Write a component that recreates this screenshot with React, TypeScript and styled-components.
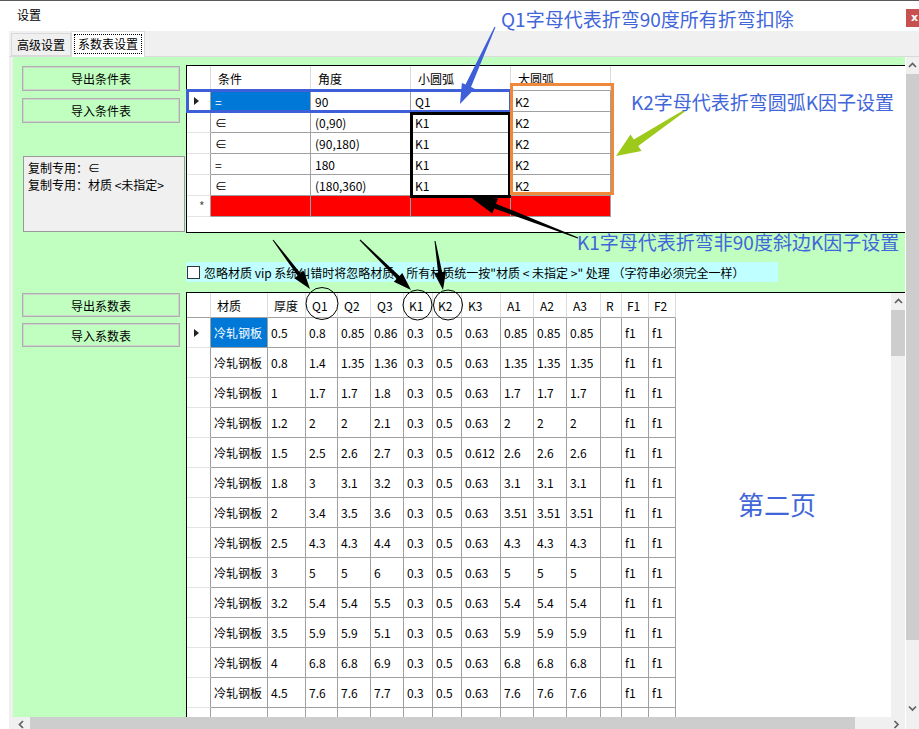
import React from "react";
import styled, { createGlobalStyle } from "styled-components";

const UI_FONT = `"Noto Sans CJK SC", "Noto Sans", "DejaVu Sans", sans-serif`;

const GlobalStyle = createGlobalStyle`
  * { box-sizing: border-box; }
  html, body { margin: 0; padding: 0; background: #ffffff; }
  body { font-family: ${UI_FONT}; font-size: 12px; color: #000; }
`;

/* ---------- window frame ---------- */
const Window = styled.div`
  position: relative;
  width: 919px;
  height: 729px;
  overflow: hidden;
  display: flex;
  flex-direction: column;
  background: #fff;
`;

const TitleBar = styled.div`
  height: 31px;
  flex: none;
  display: flex;
  justify-content: space-between;
  align-items: flex-start;
  border-top: 1px solid #5a5a5a;
  background: #fff;
`;

const Title = styled.span`
  margin: 6px 0 0 17px;
  line-height: 16px;
`;

const CloseBtn = styled.div`
  margin-top: 8px;
  width: 13px;
  height: 18px;
  padding-left: 5px;
  background: #c75050;
  color: #fff;
  font: bold 11px/17px "DejaVu Sans", sans-serif;
`;

const Body = styled.div`
  flex: 1;
  display: flex;
  min-height: 0;
`;

const WhiteEdge = styled.div`
  width: 9px;
  flex: none;
  background: #fff;
`;

const MainCol = styled.div`
  flex: 1;
  display: flex;
  flex-direction: column;
  min-width: 0;
`;

const TabStrip = styled.div`
  height: 26px;
  flex: none;
  display: flex;
  align-items: flex-end;
  padding-left: 2px;
  background: #f0f0f0;
  border-bottom: 1px solid #dadada;
`;

const Tab = styled.div<{ $active?: boolean }>`
  position: relative;
  z-index: 1;
  display: flex;
  align-items: center;
  height: ${(p) => (p.$active ? 26 : 23)}px;
  margin-bottom: ${(p) => (p.$active ? -1 : 0)}px;
  padding: ${(p) => (p.$active ? "0 2px 2px" : "0 5px")};
  background: ${(p) => (p.$active ? "#ffffff" : "#f0f0f0")};
  border: 1px solid #d9d9d9;
  border-bottom: ${(p) => (p.$active ? "none" : "1px solid #d9d9d9")};
  white-space: nowrap;
`;

const FocusLabel = styled.span`
  border: 1px dotted #000;
  padding: 0 3px;
  line-height: 18px;
`;

const ContentRow = styled.div`
  flex: 1;
  display: flex;
  min-height: 0;
`;

const GrayEdge = styled.div`
  width: 4px;
  flex: none;
  background: #f0f0f0;
`;

const CenterCol = styled.div`
  width: 892px;
  flex: none;
  display: flex;
  flex-direction: column;
`;

const RightCol = styled.div`
  width: 14px;
  flex: none;
  display: flex;
  flex-direction: column;
`;

/* ---------- tab page ---------- */
const TabPage = styled.div`
  height: 660px;
  flex: none;
  display: flex;
  flex-direction: column;
  padding-top: 8px;
  background: #c0ffc0;
`;

const Section = styled.div<{ $h?: number; $mt?: number }>`
  display: flex;
  flex: ${(p) => (p.$h ? "none" : "1")};
  height: ${(p) => (p.$h ? `${p.$h}px` : "auto")};
  margin-top: ${(p) => p.$mt ?? 0}px;
  min-height: 0;
`;

const SideCol = styled.div`
  width: 173px;
  flex: none;
  display: flex;
  flex-direction: column;
  padding-left: 9px;
`;

const FlatButton = styled.button<{ $mt: number; $h?: number }>`
  width: 158px;
  height: ${(p) => p.$h ?? 25}px;
  margin-top: ${(p) => p.$mt}px;
  padding: 0;
  background: transparent;
  border: 1px solid #adadad;
  box-shadow: inset 0 0 0 1px #cdd6cd;
  font-family: ${UI_FONT};
  font-size: 12px;
  color: #000;
`;

const CopyBox = styled.div`
  margin: 33px 0 0 1px;
  width: 162px;
  height: 76px;
  padding: 2px 4px;
  background: #f0f0f0;
  border: 1px solid #9a9a9a;
  line-height: 17px;
  white-space: nowrap;
`;

/* ---------- data grids ---------- */
const GridBox = styled.div<{ $bottom?: boolean }>`
  flex: 1;
  display: flex;
  min-width: 0;
  background: #fff;
  border-top: 1px solid #000;
  border-left: 1px solid #000;
  border-bottom: ${(p) => (p.$bottom ? "1px solid #000" : "none")};
  overflow: hidden;
`;

const TableArea = styled.div`
  flex: 1;
  min-width: 0;
  overflow: hidden;
`;

const Table = styled.div<{ $cols: string; $rows: string }>`
  display: grid;
  grid-template-columns: ${(p) => p.$cols};
  grid-template-rows: ${(p) => p.$rows};
  width: max-content;
`;

const HeadCell = styled.div<{ $pad?: number }>`
  display: flex;
  align-items: center;
  padding-left: ${(p) => p.$pad ?? 6}px;
  border-right: 1px solid #dcdcdc;
  border-bottom: 1px solid #a0a0a0;
  background: #fff;
  white-space: nowrap;
  overflow: hidden;
`;

const RowHead = styled.div`
  display: flex;
  align-items: center;
  padding-left: 7px;
  border-right: 1px solid #a0a0a0;
  border-bottom: 1px solid #e3e3e3;
  background: #fff;
`;

const Cell = styled.div<{ $sel?: boolean; $red?: boolean; $pad?: number }>`
  display: flex;
  align-items: center;
  padding-left: ${(p) => p.$pad ?? 3}px;
  border-right: 1px solid #a0a0a0;
  border-bottom: 1px solid #a0a0a0;
  background: ${(p) => (p.$sel ? "#0078d7" : p.$red ? "#ff0000" : "#fff")};
  color: ${(p) => (p.$sel ? "#fff" : "#000")};
  white-space: nowrap;
  overflow: hidden;
`;

const Pointer = styled.span`
  width: 0;
  height: 0;
  border-top: 4.5px solid transparent;
  border-bottom: 4.5px solid transparent;
  border-left: 5px solid #222;
`;

const NewRowMark = styled.span`
  margin-left: 5px;
  color: #555;
  font-size: 12px;
  line-height: 1;
`;

/* ---------- checkbox row ---------- */
const CheckRow = styled.label`
  margin: 29px 0 0 173px;
  width: 592px;
  height: 20px;
  flex: none;
  display: flex;
  align-items: center;
  gap: 4px;
  padding-left: 1px;
  background: #c0ffff;
  white-space: nowrap;
`;

const CheckBox = styled.span`
  width: 13px;
  height: 13px;
  flex: none;
  background: #fff;
  border: 1px solid #333;
`;

/* ---------- scrollbars ---------- */
const VScroll = styled.div<{ $h: number; $edge?: boolean }>`
  height: ${(p) => p.$h}px;
  width: ${(p) => (p.$edge ? 14 : 14)}px;
  flex: none;
  display: flex;
  flex-direction: column;
  background: #f0f0f0;
  border-left: ${(p) => (p.$edge ? "1px solid #fff" : "none")};
`;

const HScroll = styled.div`
  height: 12px;
  flex: none;
  display: flex;
  background: #f0f0f0;
`;

const ArrowBox = styled.div<{ $w?: number; $h?: number; $top?: number }>`
  width: ${(p) => (p.$w ? `${p.$w}px` : "auto")};
  height: ${(p) => (p.$h ? `${p.$h}px` : "auto")};
  flex: none;
  display: flex;
  justify-content: center;
  align-items: ${(p) => (p.$top !== undefined ? "flex-start" : "center")};
  padding-top: ${(p) => p.$top ?? 0}px;
`;

const Thumb = styled.div<{ $len: number; $horizontal?: boolean }>`
  flex: none;
  background: #cdcdcd;
  ${(p) => (p.$horizontal ? `width: ${p.$len}px;` : `height: ${p.$len}px;`)}
`;

const Track = styled.div`
  flex: 1;
`;

const Corner = styled.div`
  height: 12px;
  flex: none;
  background: #f0f0f0;
  border-left: 1px solid #fff;
`;

type Dir = "up" | "down" | "left" | "right";
const chevronPts: Record<Dir, string> = {
  up: "1,6 4.5,2.5 8,6",
  down: "1,2.5 4.5,6 8,2.5",
  left: "6,1 2.5,4.5 6,8",
  right: "2.5,1 6,4.5 2.5,8",
};
const ChevronSvg = styled.svg`
  display: block;
`;
function Chevron({ dir }: { dir: Dir }) {
  return (
    <ChevronSvg width="9" height="9" viewBox="0 0 9 9">
      <polyline points={chevronPts[dir]} fill="none" stroke="#606060" strokeWidth="1.7" />
    </ChevronSvg>
  );
}

/* ---------- annotations (drawn over the screenshot) ---------- */
const OverlaySvg = styled.svg`
  position: absolute;
  left: 0;
  top: 0;
  pointer-events: none;
  z-index: 5;
`;

const Note = styled.span<{ $x: number; $y: number; $size?: number }>`
  position: absolute;
  left: ${(p) => p.$x}px;
  top: ${(p) => p.$y}px;
  z-index: 6;
  font-size: ${(p) => p.$size ?? 19}px;
  line-height: 1;
  color: #4166d9;
  white-space: nowrap;
  pointer-events: none;
`;

function arrowPoints(
  tx: number,
  ty: number,
  hx: number,
  hy: number,
  headLen: number,
  headHalf: number,
  shaftHalf: number,
  tailHalf: number
) {
  const dx = hx - tx;
  const dy = hy - ty;
  const len = Math.hypot(dx, dy);
  const ux = dx / len;
  const uy = dy / len;
  const nx = -uy;
  const ny = ux;
  const bx = hx - ux * headLen;
  const by = hy - uy * headLen;
  const pts = [
    [tx + nx * tailHalf, ty + ny * tailHalf],
    [bx + nx * shaftHalf, by + ny * shaftHalf],
    [bx + nx * headHalf, by + ny * headHalf],
    [hx, hy],
    [bx - nx * headHalf, by - ny * headHalf],
    [bx - nx * shaftHalf, by - ny * shaftHalf],
    [tx - nx * tailHalf, ty - ny * tailHalf],
  ];
  return pts.map((p) => `${p[0].toFixed(1)},${p[1].toFixed(1)}`).join(" ");
}

/* ---------- data ---------- */
const upperHeaders = ["条件", "角度", "小圆弧", "大圆弧"];
const upperRows = [
  ["=", "90", "Q1", "K2"],
  ["∈", "(0,90)", "K1", "K2"],
  ["∈", "(90,180)", "K1", "K2"],
  ["=", "180", "K1", "K2"],
  ["∈", "(180,360)", "K1", "K2"],
];

const lowerCols: { name: string; w: number }[] = [
  { name: "材质", w: 57 },
  { name: "厚度", w: 38 },
  { name: "Q1", w: 32 },
  { name: "Q2", w: 33 },
  { name: "Q3", w: 33 },
  { name: "K1", w: 29 },
  { name: "K2", w: 29 },
  { name: "K3", w: 39 },
  { name: "A1", w: 33 },
  { name: "A2", w: 33 },
  { name: "A3", w: 34 },
  { name: "R", w: 21 },
  { name: "F1", w: 27 },
  { name: "F2", w: 27 },
];

const lowerData: string[][] = [
  ["0.5", "0.8", "0.85", "0.86", "0.3", "0.5", "0.63", "0.85", "0.85", "0.85"],
  ["0.8", "1.4", "1.35", "1.36", "0.3", "0.5", "0.63", "1.35", "1.35", "1.35"],
  ["1", "1.7", "1.7", "1.8", "0.3", "0.5", "0.63", "1.7", "1.7", "1.7"],
  ["1.2", "2", "2", "2.1", "0.3", "0.5", "0.63", "2", "2", "2"],
  ["1.5", "2.5", "2.6", "2.7", "0.3", "0.5", "0.612", "2.6", "2.6", "2.6"],
  ["1.8", "3", "3.1", "3.2", "0.3", "0.5", "0.63", "3.1", "3.1", "3.1"],
  ["2", "3.4", "3.5", "3.6", "0.3", "0.5", "0.63", "3.51", "3.51", "3.51"],
  ["2.5", "4.3", "4.3", "4.4", "0.3", "0.5", "0.63", "4.3", "4.3", "4.3"],
  ["3", "5", "5", "6", "0.3", "0.5", "0.63", "5", "5", "5"],
  ["3.2", "5.4", "5.4", "5.5", "0.3", "0.5", "0.63", "5.4", "5.4", "5.4"],
  ["3.5", "5.9", "5.9", "5.1", "0.3", "0.5", "0.63", "5.9", "5.9", "5.9"],
  ["4", "6.8", "6.8", "6.9", "0.3", "0.5", "0.63", "6.8", "6.8", "6.8"],
  ["4.5", "7.6", "7.6", "7.7", "0.3", "0.5", "0.63", "7.6", "7.6", "7.6"],
];

const lowerTemplate = ["24px", ...lowerCols.map((c) => `${c.w}px`)].join(" ");

function UpperGrid() {
  return (
    <GridBox $bottom>
      <TableArea>
        <Table $cols="24px repeat(4, 100px)" $rows="25px repeat(6, 21px)">
          <HeadCell />
          {upperHeaders.map((h) => (
            <HeadCell key={h} $pad={7}>
              {h}
            </HeadCell>
          ))}
          {upperRows.map((row, r) => (
            <React.Fragment key={r}>
              <RowHead>{r === 0 && <Pointer />}</RowHead>
              {row.map((v, c) => (
                <Cell key={c} $pad={4} $sel={r === 0 && c === 0}>
                  {v}
                </Cell>
              ))}
            </React.Fragment>
          ))}
          <RowHead>
            <NewRowMark>*</NewRowMark>
          </RowHead>
          {[0, 1, 2, 3].map((c) => (
            <Cell key={c} $red />
          ))}
        </Table>
      </TableArea>
    </GridBox>
  );
}

function LowerGrid() {
  return (
    <GridBox>
      <TableArea>
        <Table $cols={lowerTemplate} $rows="25px repeat(14, 30px)">
          <HeadCell />
          {lowerCols.map((c) => (
            <HeadCell key={c.name} $pad={c.w < 30 ? 5 : 6}>
              {c.name}
            </HeadCell>
          ))}
          {lowerData.map((row, r) => (
            <React.Fragment key={r}>
              <RowHead>{r === 0 && <Pointer />}</RowHead>
              <Cell $sel={r === 0}>冷轧钢板</Cell>
              {row.map((v, c) => (
                <Cell key={c}>{v}</Cell>
              ))}
              <Cell />
              <Cell>f1</Cell>
              <Cell>f1</Cell>
            </React.Fragment>
          ))}
          <RowHead />
          {lowerCols.map((c) => (
            <Cell key={c.name} />
          ))}
        </Table>
      </TableArea>
      <VScroll $h={424}>
        <ArrowBox $h={17}>
          <Chevron dir="up" />
        </ArrowBox>
        <Thumb $len={46} />
        <Track />
      </VScroll>
    </GridBox>
  );
}

function Annotations() {
  return (
    <>
      <OverlaySvg width="919" height="729" viewBox="0 0 919 729">
        {/* blue frame around the first condition row */}
        <rect x="187.5" y="90.5" width="323" height="21" fill="none" stroke="#3e5fd8" strokeWidth="3" />
        {/* black frame around K1 cells */}
        <rect x="411.5" y="113.5" width="98" height="83" fill="none" stroke="#000" strokeWidth="3" />
        {/* orange frame around K2 cells */}
        <rect x="511.5" y="84.5" width="101" height="109" fill="none" stroke="#f0883a" strokeWidth="3" />
        {/* arrows */}
        <polygon points={arrowPoints(495, 27, 460, 104, 20, 7, 3, 0.6)} fill="#3e5fd8" />
        <polygon points={arrowPoints(684, 111, 616, 156, 24, 10, 4, 1)} fill="#9cc91a" />
        <polygon points={arrowPoints(578, 238, 469, 196, 28, 8, 2.5, 0.6)} fill="#000" />
        <polygon points={arrowPoints(273, 240, 310, 289, 18, 6, 2, 0.5)} fill="#000" />
        <polygon points={arrowPoints(360, 240, 411, 290, 18, 6, 2, 0.5)} fill="#000" />
        <polygon points={arrowPoints(435, 241, 443, 290, 18, 6, 2, 0.5)} fill="#000" />
        {/* header circles */}
        <ellipse cx="322" cy="303.5" rx="16" ry="16" fill="none" stroke="#000" strokeWidth="1" />
        <ellipse cx="417.5" cy="305" rx="14.5" ry="15" fill="none" stroke="#000" strokeWidth="1" />
        <ellipse cx="448" cy="305" rx="14.5" ry="15" fill="none" stroke="#000" strokeWidth="1" />
      </OverlaySvg>
      <Note $x={501} $y={9}>Q1字母代表折弯90度所有折弯扣除</Note>
      <Note $x={631} $y={92}>K2字母代表折弯圆弧K因子设置</Note>
      <Note $x={577} $y={232}>K1字母代表折弯非90度斜边K因子设置</Note>
      <Note $x={738} $y={491} $size={26}>
        第二页
      </Note>
    </>
  );
}

export default function App() {
  return (
    <>
      <GlobalStyle />
      <Window>
        <TitleBar>
          <Title>设置</Title>
          <CloseBtn>x</CloseBtn>
        </TitleBar>
        <Body>
          <WhiteEdge />
          <MainCol>
            <TabStrip>
              <Tab>高级设置</Tab>
              <Tab $active>
                <FocusLabel>系数表设置</FocusLabel>
              </Tab>
            </TabStrip>
            <ContentRow>
              <GrayEdge />
              <CenterCol>
                <TabPage>
                  <Section $h={168}>
                    <SideCol>
                      <FlatButton $mt={1}>导出条件表</FlatButton>
                      <FlatButton $mt={7}>导入条件表</FlatButton>
                      <CopyBox>
                        复制专用：∈
                        <br />
                        复制专用：材质 &lt;未指定&gt;
                      </CopyBox>
                    </SideCol>
                    <UpperGrid />
                  </Section>
                  <CheckRow>
                    <CheckBox />
                    忽略材质 vip 系统纠错时将忽略材质，所有材质统一按"材质 &lt; 未指定 &gt;" 处理 （字符串必须完全一样）
                  </CheckRow>
                  <Section $mt={10}>
                    <SideCol>
                      <FlatButton $mt={1} $h={24}>
                        导出系数表
                      </FlatButton>
                      <FlatButton $mt={6} $h={24}>
                        导入系数表
                      </FlatButton>
                    </SideCol>
                    <LowerGrid />
                  </Section>
                </TabPage>
                <HScroll>
                  <ArrowBox $w={17} $top={3}>
                    <Chevron dir="left" />
                  </ArrowBox>
                  <Thumb $horizontal $len={825} />
                  <Track />
                  <ArrowBox $w={17} $top={3}>
                    <Chevron dir="right" />
                  </ArrowBox>
                </HScroll>
              </CenterCol>
              <RightCol>
                <VScroll $h={660} $edge>
                  <ArrowBox $h={17}>
                    <Chevron dir="up" />
                  </ArrowBox>
                  <Thumb $len={566} />
                  <Track />
                  <ArrowBox $h={17}>
                    <Chevron dir="down" />
                  </ArrowBox>
                </VScroll>
                <Corner />
              </RightCol>
            </ContentRow>
          </MainCol>
        </Body>
        <Annotations />
      </Window>
    </>
  );
}
